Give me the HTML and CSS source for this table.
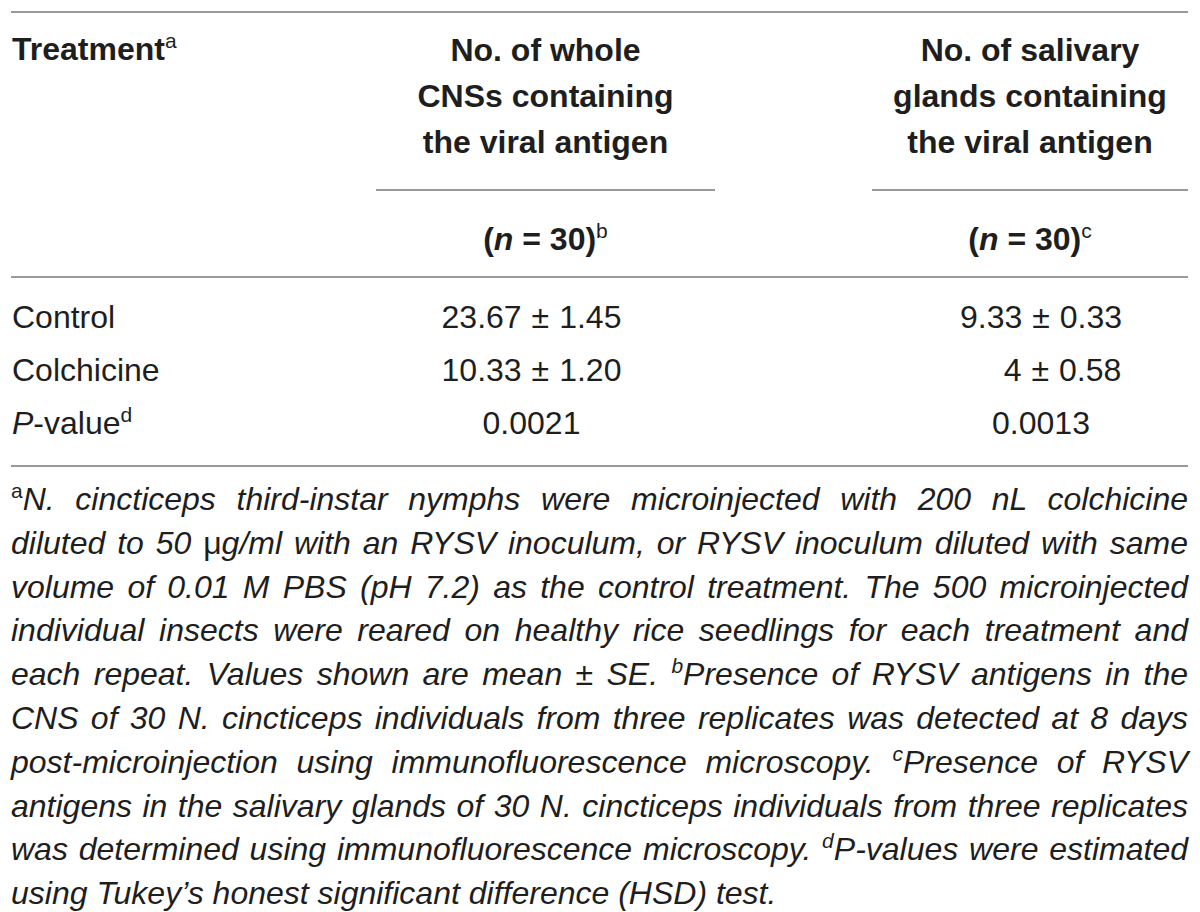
FILE: index.html
```html
<!DOCTYPE html>
<html lang="en">
<head>
<meta charset="utf-8">
<title>Table</title>
<link rel="stylesheet" href="styles.css">
</head>
<body>
<div class="page">
  <table class="data">
    <colgroup>
      <col class="c-treat">
      <col class="c-cns">
      <col class="c-gap">
      <col class="c-sal">
    </colgroup>
    <thead>
      <tr class="head-top">
        <th rowspan="2" class="treat">Treatment<sup class="sx">a</sup></th>
        <th class="grp">No. of whole<br>CNSs containing<br>the viral antigen</th>
        <th rowspan="2" class="gap"></th>
        <th class="grp">No. of salivary<br>glands containing<br>the viral antigen</th>
      </tr>
      <tr class="head-n">
        <th class="num">(<i>n</i> = 30)<sup class="sx">b</sup></th>
        <th class="num">(<i>n</i> = 30)<sup class="sx">c</sup></th>
      </tr>
    </thead>
    <tbody>
      <tr class="first">
        <td class="label">Control</td>
        <td class="v1">23.67<span class="pm">±</span>1.45</td>
        <td></td>
        <td class="v2">9.33<span class="pm">±</span>0.33</td>
      </tr>
      <tr>
        <td class="label">Colchicine</td>
        <td class="v1">10.33<span class="pm">±</span>1.20</td>
        <td></td>
        <td class="v2 shift">4<span class="pm">±</span>0.58</td>
      </tr>
      <tr class="last">
        <td class="label"><i>P</i>-value<sup class="sx">d</sup></td>
        <td class="v1">0.0021</td>
        <td></td>
        <td class="v2">0.0013</td>
      </tr>
    </tbody>
  </table>
  <p class="notes">
    <span class="ln"><sup class="sx up">a</sup>N. cincticeps third-instar nymphs were microinjected with 200 nL colchicine</span>
    <span class="ln">diluted to 50 <span class="up">μ</span>g/ml with an RYSV inoculum, or RYSV inoculum diluted with same</span>
    <span class="ln">volume of 0.01 M PBS (pH 7.2) as the control treatment. The 500 microinjected</span>
    <span class="ln">individual insects were reared on healthy rice seedlings for each treatment and</span>
    <span class="ln">each repeat. Values shown are mean <span class="up">±</span> SE. <sup class="sx">b</sup>Presence of RYSV antigens in the</span>
    <span class="ln">CNS of 30 N. cincticeps individuals from three replicates was detected at 8 days</span>
    <span class="ln">post-microinjection using immunofluorescence microscopy. <sup class="sx">c</sup>Presence of RYSV</span>
    <span class="ln">antigens in the salivary glands of 30 N. cincticeps individuals from three replicates</span>
    <span class="ln">was determined using immunofluorescence microscopy. <sup class="sx">d</sup>P-values were estimated</span>
    <span class="ln end">using Tukey’s honest significant difference (HSD) test.</span>
  </p>
</div>
</body>
</html>
```

FILE: styles.css
```css
html, body {
  margin: 0;
  padding: 0;
  background: #ffffff;
}

body {
  font-family: "Liberation Sans", Arial, Helvetica, sans-serif;
  color: #1e1e1e;
  font-size: 32px;
}

.page {
  padding: 11px 12px 0 11px;
}

.data {
  width: 1177px;
  border-collapse: collapse;
  table-layout: fixed;
}

.c-treat { width: 365px; }
.c-cns { width: 339px; }
.c-gap { width: 157px; }
.c-sal { width: 316px; }

.data th,
.data td {
  padding: 0;
  line-height: 45px;
}

.data thead tr.head-top th {
  border-top: 2px solid #9a9a9a;
}

.data th {
  font-weight: bold;
  text-align: center;
  vertical-align: top;
}

.data th.treat {
  text-align: left;
  padding: 14px 0 0 1px;
  border-bottom: 2px solid #9a9a9a;
}

.data th.gap {
  border-bottom: 2px solid #9a9a9a;
}

.data th.grp {
  line-height: 46px;
  padding: 14px 0 24px;
  border-bottom: 2px solid #9a9a9a;
}

.data tr.head-n th.num {
  padding: 26px 0 14px;
  border-bottom: 2px solid #9a9a9a;
}

.data td {
  font-weight: normal;
  padding: 4px 0;
}

.data td.label {
  text-align: left;
  padding-left: 1px;
}

.data tr.first td {
  padding-top: 17px;
}

.data tr.last td {
  padding-bottom: 19px;
  border-bottom: 2px solid #9a9a9a;
}

.data td.v1 {
  text-align: center;
  padding-right: 28px;
}

.data td.v2 {
  text-align: center;
  padding-left: 22px;
}

.data td.v2.shift {
  padding-left: 65px;
}

.pm {
  padding: 0 10px;
}

.sx {
  font-size: 21px;
  line-height: 0;
  vertical-align: 0.55em;
  font-weight: normal;
}

.notes {
  width: 1177px;
  margin: 11px 0 0;
  font-style: italic;
  line-height: 43.8px;
}

.notes .ln {
  display: block;
  white-space: nowrap;
  text-align: justify;
  text-align-last: justify;
}

.notes .ln.end {
  text-align-last: left;
}

.notes .up {
  font-style: normal;
}
```
